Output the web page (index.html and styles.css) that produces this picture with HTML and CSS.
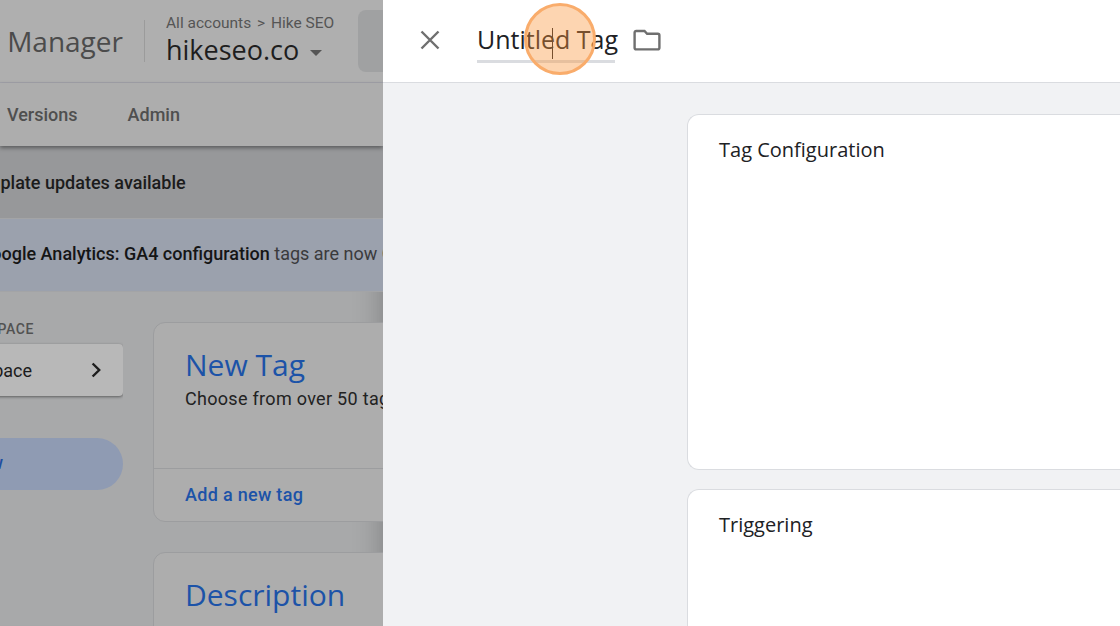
FILE: index.html
```html
<!DOCTYPE html>
<html lang="en">
<head>
    <meta charset="UTF-8">
    <meta name="viewport" content="width=device-width, initial-scale=1.0">
    <title>Untitled Tag</title>
    <link rel="stylesheet" href="styles.css">
</head>
<body>
    <div class="backdrop">
        <div class="topbar">
            <div class="product">Tag Manager</div>
            <div class="topbar-divider"></div>
            <div class="account">
                <div class="crumbs">All accounts <span class="crumb-sep">&gt;</span> Hike SEO</div>
                <div class="container-name">hikeseo.co <span class="caret"></span></div>
            </div>
            <div class="search-box"></div>
        </div>
        <div class="tabs">
            <span class="tab">Versions</span>
            <span class="tab">Admin</span>
        </div>
        <div class="notice"><b>Template updates available</b></div>
        <div class="notice-blue"><b>Google Analytics: GA4 configuration</b> tags are now Google tags</div>
        <div class="workspace">
            <div class="side">
                <div class="side-label">CURRENT WORKSPACE</div>
                <div class="side-card">
                    <span>Default Workspace</span>
                    <svg width="24" height="24" viewBox="0 0 24 24"><path d="M8.6 5.5 15.2 12l-6.6 6.5" fill="none" stroke="#1d1d1d" stroke-width="2.4"/></svg>
                </div>
                <div class="side-pill">Overview</div>
            </div>
            <div class="cards">
                <div class="card">
                    <div class="card-body">
                        <div class="card-title">New Tag</div>
                        <div class="card-text">Choose from over 50 tag types</div>
                    </div>
                    <div class="card-foot">Add a new tag</div>
                </div>
                <div class="card">
                    <div class="card-body">
                        <div class="card-title">Description</div>
                    </div>
                </div>
            </div>
        </div>
    </div>
    <div class="panel">
        <div class="panel-head">
            <svg class="close-icon" width="24" height="24" viewBox="0 0 24 24"><path d="M3.5 3.5l17 17M20.5 3.5l-17 17" fill="none" stroke="#6f6f6f" stroke-width="2.4"/></svg>
            <div class="tag-name">Untitled Tag</div>
            <svg class="folder-icon" width="28" height="24" viewBox="0 0 28 24"><path d="M3.2 3h8.3l2.6 2.8h10.7c.9 0 1.6.7 1.6 1.6v12.4c0 .9-.7 1.6-1.6 1.6H3.2c-.9 0-1.6-.7-1.6-1.6V4.6C1.6 3.7 2.3 3 3.2 3z" fill="none" stroke="#6f6f6f" stroke-width="2.4"/></svg>
        </div>
        <div class="panel-body">
            <div class="config-card">Tag Configuration</div>
            <div class="config-card">Triggering</div>
        </div>
    </div>
    <div class="text-cursor"></div>
    <div class="click-spot"></div>
</body>
</html>
```

FILE: styles.css
```css
body {
    margin: 0;
    width: 1120px;
    height: 626px;
    overflow: hidden;
    display: flex;
    font-family: Roboto, Arial, sans-serif;
    color: #1c1c1c;
    background-color: #fff;
}
.backdrop {
    width: 383px;
    flex-shrink: 0;
    overflow: hidden;
    background-color: #a8a9aa;
    box-shadow: inset -30px 0 30px -30px rgba(0, 0, 0, 0.25);
}
.topbar {
    height: 82px;
    display: flex;
    justify-content: flex-end;
    align-items: center;
    background-color: #afafaf;
    border-bottom: 1px solid #a2a3aa;
}
.product {
    flex-shrink: 0;
    font-family: "Open Sans", sans-serif;
    font-size: 28px;
    color: #4b4b4b;
    white-space: nowrap;
}
.topbar-divider {
    flex-shrink: 0;
    width: 1px;
    height: 42px;
    margin: 0 21px 0 21px;
    background-color: #9b9b9b;
}
.account {
    flex-shrink: 0;
    width: 175px;
    margin-right: 17px;
}
.crumbs {
    font-size: 15.5px;
    color: #555;
    white-space: nowrap;
}
.crumb-sep {
    margin: 0 2px;
}
.container-name {
    font-family: "Open Sans", sans-serif;
    font-size: 27px;
    line-height: 36px;
    color: #1e1e1e;
}
.caret {
    display: inline-block;
    width: 0;
    height: 0;
    margin-left: 4px;
    vertical-align: 4px;
    border-left: 6px solid transparent;
    border-right: 6px solid transparent;
    border-top: 6px solid #555;
}
.search-box {
    flex-shrink: 0;
    width: 25px;
    height: 62px;
    border-radius: 8px 0 0 8px;
    background-color: #a0a1a2;
}
.tabs {
    height: 63px;
    display: flex;
    align-items: center;
    gap: 50px;
    padding-left: 7px;
    background-color: #adadad;
    box-shadow: 0 2px 4px rgba(0, 0, 0, 0.4);
    position: relative;
    font-size: 18px;
    font-weight: 500;
    color: #4f4f4f;
}
.notice {
    height: 72px;
    display: flex;
    align-items: center;
    margin-left: -35px;
    font-size: 18px;
    background-color: #97989a;
    border-bottom: 1px solid #a3a4a6;
}
.notice b {
    font-weight: 500;
    white-space: nowrap;
}
.notice-blue {
    height: 72px;
    line-height: 70px;
    margin-left: -21px;
    font-size: 18px;
    white-space: nowrap;
    color: #3a3a3c;
    background-color: #9ba1ad;
    border-bottom: 1px solid #a3a4a6;
}
.notice-blue b {
    font-weight: 500;
    color: #151515;
}
.workspace {
    display: flex;
    padding-top: 30px;
}
.side {
    flex-shrink: 0;
    width: 123px;
    margin-right: 30px;
    overflow: hidden;
    display: flex;
    flex-direction: column;
    align-items: flex-end;
}
.side-label {
    height: 22px;
    line-height: 15px;
    font-size: 14px;
    font-weight: 500;
    letter-spacing: 0.6px;
    color: #525252;
    white-space: nowrap;
    margin-right: 89px;
}
.side-card {
    flex-shrink: 0;
    box-sizing: border-box;
    width: 260px;
    height: 52px;
    display: flex;
    justify-content: flex-end;
    align-items: center;
    gap: 52px;
    padding-right: 15px;
    font-size: 18px;
    white-space: nowrap;
    background-color: #b8b8b8;
    border-radius: 4px;
    box-shadow: 0 1px 3px rgba(0, 0, 0, 0.45);
}
.side-pill {
    flex-shrink: 0;
    box-sizing: border-box;
    width: 260px;
    height: 52px;
    margin-top: 42px;
    padding-right: 120px;
    line-height: 50px;
    text-align: right;
    font-size: 18px;
    font-weight: 500;
    color: #1f4ea0;
    background-color: #8f9bb3;
    border-radius: 0 26px 26px 0;
}
.cards {
    flex-shrink: 0;
    width: 500px;
    display: flex;
    flex-direction: column;
    gap: 30px;
}
.card {
    box-sizing: border-box;
    height: 200px;
    display: flex;
    flex-direction: column;
    background-color: #adadad;
    border: 1px solid #9c9d9f;
    border-radius: 12px;
}
.card-body {
    flex: 1;
    padding: 21px 31px 0;
}
.card-title {
    font-family: "Open Sans", sans-serif;
    font-size: 30px;
    line-height: 42px;
    color: #1c53a8;
}
.card-text {
    font-size: 18px;
    line-height: 26px;
    letter-spacing: 0.3px;
    color: #222;
    white-space: nowrap;
}
.card-foot {
    height: 52px;
    line-height: 52px;
    padding-left: 31px;
    font-size: 18px;
    font-weight: 500;
    letter-spacing: 0.3px;
    color: #1c53a8;
    border-top: 1px solid #9c9d9f;
}
.panel {
    flex: 1;
    min-width: 0;
    display: flex;
    flex-direction: column;
    background-color: #f1f2f4;
}
.panel-head {
    flex-shrink: 0;
    box-sizing: border-box;
    height: 83px;
    display: flex;
    align-items: center;
    padding-left: 35px;
    padding-bottom: 2px;
    background-color: #fff;
    border-bottom: 1px solid #dadce0;
}
.tag-name {
    box-sizing: border-box;
    width: 138px;
    height: 46px;
    margin: 0 18px 0 35px;
    padding-top: 2px;
    line-height: 40px;
    font-family: "Open Sans", sans-serif;
    font-size: 25px;
    white-space: nowrap;
    color: #202124;
    border-bottom: 3px solid #dadce0;
}
.folder-icon {
    flex-shrink: 0;
}
.panel-body {
    display: flex;
    flex-direction: column;
    gap: 19px;
    padding: 31px 0 0 304px;
}
.config-card {
    flex-shrink: 0;
    box-sizing: border-box;
    width: 520px;
    height: 356px;
    padding: 20px 31px;
    font-family: "Open Sans", sans-serif;
    font-size: 20px;
    line-height: 30px;
    color: #202124;
    background-color: #fff;
    border: 1px solid #dadce0;
    border-right: none;
    border-radius: 12px 0 0 12px;
}
.text-cursor {
    position: absolute;
    left: 552px;
    top: 28px;
    width: 1px;
    height: 31px;
    background-color: #202124;
}
.click-spot {
    position: absolute;
    left: 524px;
    top: 3px;
    box-sizing: border-box;
    width: 72px;
    height: 72px;
    border-radius: 50%;
    background-color: rgba(250, 150, 60, 0.4);
    border: 3px solid #f9ac6b;
}
```
